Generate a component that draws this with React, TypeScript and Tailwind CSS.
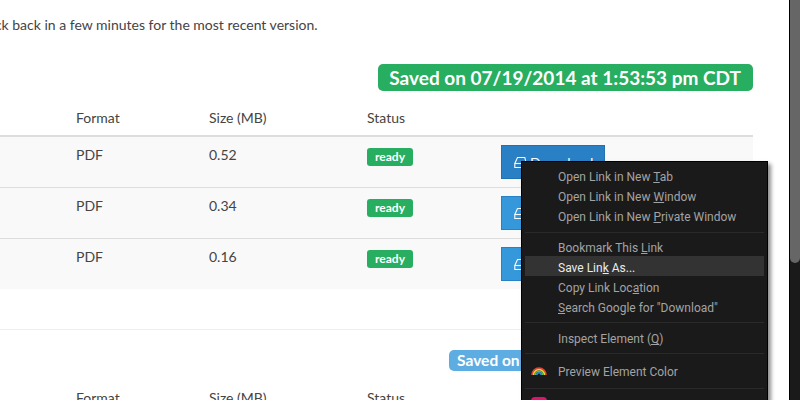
import React from 'react';

const rows = [
  { size: '0.52', hover: true, last: false },
  { size: '0.34', hover: false, last: false },
  { size: '0.16', hover: false, last: true },
];

const gridCols = 'grid grid-cols-[76px_133px_158px_134px_1fr]';

function DriveIcon() {
  return (
    <svg width="13" height="13" viewBox="0 0 13 13" fill="none" stroke="white" strokeWidth="1.1">
      <path d="M0.8 7.5 L3.5 1.5 H10.8 L12.2 7.5 V11.5 H0.8 Z" />
      <path d="M0.8 7.5 H12.2" />
    </svg>
  );
}

function Rainbow() {
  return (
    <svg width="16" height="12" viewBox="0 0 16 12" fill="none" strokeWidth="1.6">
      <path d="M1 11 A7 7 0 0 1 15 11" stroke="#e8403a" />
      <path d="M2.6 11 A5.4 5.4 0 0 1 13.4 11" stroke="#f5d033" />
      <path d="M4.2 11 A3.8 3.8 0 0 1 11.8 11" stroke="#4fc04f" />
      <path d="M5.8 11 A2.2 2.2 0 0 1 10.2 11" stroke="#3a8de0" />
    </svg>
  );
}

function MenuItem({ children, active }: { children: React.ReactNode; active?: boolean }) {
  return (
    <div className={`h-5 mx-[3px] pl-[33px] leading-[24px] whitespace-nowrap ${active ? 'bg-[#333333] text-[#ececec]' : 'text-[#a3a3a3]'}`}>
      {children}
    </div>
  );
}

function Separator({ className }: { className: string }) {
  return <div className={`mx-[3px] h-px bg-[#2a2a2a] ${className}`} />;
}

function ContextMenu() {
  return (
    <div
      className="absolute left-[521px] top-[161px] w-[247px] h-[260px] bg-[#1a1a1a] border border-black pt-[3px] text-[12px] shadow-[3px_3px_4px_rgba(0,0,0,0.45)]"
      style={{ fontFamily: 'Roboto, sans-serif' }}
    >
      <MenuItem>Open Link in New <span className="underline">T</span>ab</MenuItem>
      <MenuItem>Open Link in New <span className="underline">W</span>indow</MenuItem>
      <MenuItem>Open Link in New <span className="underline">P</span>rivate Window</MenuItem>
      <Separator className="mt-[7px] mb-[3px]" />
      <MenuItem>Bookmark This <span className="underline">L</span>ink</MenuItem>
      <MenuItem active>Save Lin<span className="underline">k</span> As...</MenuItem>
      <MenuItem>Copy Link Loc<span className="underline">a</span>tion</MenuItem>
      <MenuItem><span className="underline">S</span>earch Google for "Download"</MenuItem>
      <Separator className="mt-[6px] mb-[4px]" />
      <MenuItem>Inspect Element (<span className="underline">Q</span>)</MenuItem>
      <Separator className="mt-[6px] mb-[6px]" />
      <div className="flex items-start h-5 mx-[3px] pl-[6px] text-[#a3a3a3] whitespace-nowrap">
        <span className="w-[27px] flex mt-[4px]"><Rainbow /></span>
        <span className="leading-[24px]">Preview Element Color</span>
      </div>
      <Separator className="mt-[8px] mb-[8px]" />
      <div className="ml-[9px] w-4 h-4 rounded-sm bg-[#e0136c]" />
    </div>
  );
}

function HeaderRow() {
  return (
    <div className={`${gridCols} text-[#444444]`}>
      <span />
      <span>Format</span>
      <span>Size (MB)</span>
      <span>Status</span>
      <span />
    </div>
  );
}

export default function App() {
  return (
    <div
      className="relative flex w-[800px] h-[400px] overflow-hidden bg-white text-[14px] text-[#444444]"
      style={{ fontFamily: 'Lato, sans-serif' }}
    >
      <div className="w-[789px] shrink-0">
        <div className="w-[753px]">
          <p className="mt-[14px] h-[21px] leading-[21px] -ml-[27px] whitespace-nowrap">
            check back in a few minutes for the most recent version.
          </p>

          <div className="mt-[29px] flex justify-end">
            <span className="h-[27px] pl-[11px] pr-[12px] rounded-[5px] bg-[#27ae60] text-white font-bold text-[19px] leading-[27px] whitespace-nowrap">
              Saved on 07/19/2014 at 1:53:53 pm CDT
            </span>
          </div>

          <div className="pt-[17px] h-[46px] border-b-2 border-[#dddddd] leading-[20px]">
            <HeaderRow />
          </div>

          {rows.map((row) => (
            <div
              key={row.size}
              className={`${gridCols} bg-[#f9f9f9] ${row.last ? 'h-[50px]' : 'h-[51px] border-b border-[#dddddd]'}`}
            >
              <span />
              <span className="pt-[8px] leading-[20px]">PDF</span>
              <span className="pt-[8px] leading-[20px]">{row.size}</span>
              <div className="pt-[11px]">
                <span className="block w-[46px] h-[18px] rounded-[3px] bg-[#27ae60] text-white text-[12px] font-bold leading-[17px] text-center">
                  ready
                </span>
              </div>
              <div className="pt-[8px]">
                <button
                  className={`flex items-center gap-[3px] w-[104px] h-[34px] pl-[12px] border text-white text-[14px] ${
                    row.hover ? 'bg-[#2a80c5] border-[#2471b0]' : 'bg-[#3498db] border-[#2a80c5]'
                  }`}
                >
                  <DriveIcon />
                  Download
                </button>
              </div>
            </div>
          ))}

          <div className="mt-[40px] h-px bg-[#eeeeee]" />

          <div className="mt-[20px] flex justify-end">
            <span className="h-[21px] pl-[8px] pr-[9px] rounded-[5px] bg-[#5dade2] text-white font-bold text-[15.5px] leading-[21px] whitespace-nowrap">
              Saved on 07/19/2014 at 1:23:53 pm CDT
            </span>
          </div>

          <div className="mt-[17px] leading-[20px]">
            <HeaderRow />
          </div>
        </div>
      </div>

      <div className="flex-1 flex flex-col border-l border-black bg-[#1a1a1a]">
        <div className="h-[263px] bg-[#666666] rounded-b-[6px]" />
      </div>

      <ContextMenu />
    </div>
  );
}
